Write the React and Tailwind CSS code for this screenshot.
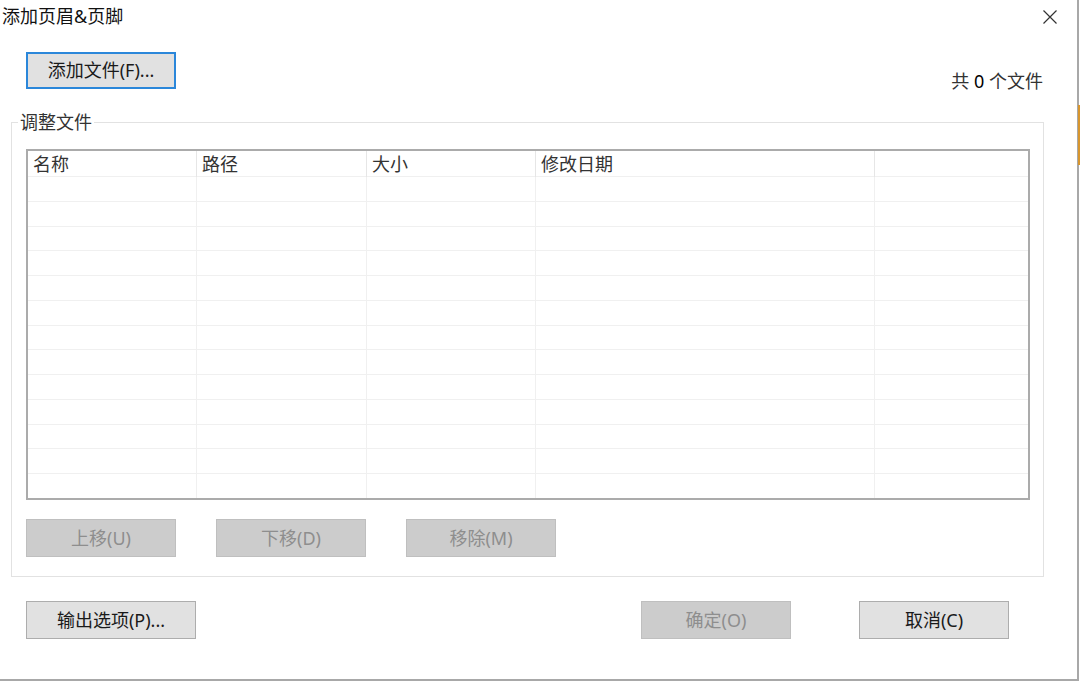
import React from "react";

const FONT = { fontFamily: '"Noto Sans", "Noto Sans CJK SC", sans-serif' };

function DisabledBtn({ children, w = "w-[150px]" }) {
  return (
    <div className={`${w} h-[38px] bg-[#cccccc] border border-[#bfbfbf] flex items-center justify-center text-[18px] text-[#8e8e8e]`}>
      {children}
    </div>
  );
}

function NormalBtn({ children, w = "w-[150px]" }) {
  return (
    <div className={`${w} h-[38px] bg-[#e1e1e1] border border-[#adadad] flex items-center justify-center text-[18px] text-[#1a1a1a]`}>
      {children}
    </div>
  );
}

const cols = ["名称", "路径", "大小", "修改日期", ""];

export default function App() {
  const rows = Array.from({ length: 13 });
  return (
    <div className="w-[1080px] h-[681px] bg-white relative overflow-hidden" style={FONT}>
      <div className="w-[1079px] h-[681px] border-r-2 border-b-2 border-[#a8a8a8] flex flex-col">
        {/* title bar */}
        <div className="h-[33px] flex items-center justify-between pl-[2px] pr-[20px]">
          <span className="text-[18px] leading-[33px] text-[#111]">添加页眉&amp;页脚</span>
          <svg width="14" height="14" viewBox="0 0 14 14" className="mt-[1px]">
            <path d="M0.5 0.5 L13.5 13.5 M13.5 0.5 L0.5 13.5" stroke="#333" strokeWidth="1.2" fill="none" />
          </svg>
        </div>

        {/* add file row */}
        <div className="mt-[19px] flex items-end justify-between pl-[26px] pr-[34px]">
          <div className="w-[150px] h-[37px] bg-[#e1e1e1] border-2 border-[#2b87da] flex items-center justify-center text-[18px] text-[#1a1a1a]">
            添加文件(F)...
          </div>
          <div className="text-[18px] leading-[18px] mb-[-1px] text-[#333]">
            共 <span className="text-black">0</span> 个文件
          </div>
        </div>

        {/* group box */}
        <div className="relative mt-[33px] ml-[11px] w-[1033px] border border-[#e2e2e2] pl-[14px] pt-[26px] pb-[19px]">
          <span className="absolute left-[6px] top-[-12px] bg-white px-[2px] text-[18px] leading-[22px] text-[#333]">
            调整文件
          </span>
          {/* table */}
          <div className="w-[1004px] h-[351px] border-2 border-[#ababab] overflow-hidden bg-white">
            <div className="grid grid-cols-[169px_170px_169px_339px_1fr] h-[26px] border-b border-[#f0f0f0]">
              {cols.map((c, i) => (
                <div
                  key={i}
                  className={`h-full pl-[5px] text-[18px] leading-[26px] text-[#333] ${i < 4 ? "border-r border-[#e6e6e6]" : ""}`}
                >
                  {c}
                </div>
              ))}
            </div>
            {rows.map((_, r) => (
              <div key={r} className="grid grid-cols-[169px_170px_169px_339px_1fr] h-[24.75px] border-b border-[#f0f0f0]">
                {cols.map((_, i) => (
                  <div key={i} className={`h-full ${i < 4 ? "border-r border-[#f0f0f0]" : ""}`} />
                ))}
              </div>
            ))}
          </div>
          {/* move buttons */}
          <div className="mt-[19px] flex gap-[40px]">
            <DisabledBtn>上移(U)</DisabledBtn>
            <DisabledBtn>下移(D)</DisabledBtn>
            <DisabledBtn>移除(M)</DisabledBtn>
          </div>
        </div>

        {/* bottom buttons */}
        <div className="mt-[24px] flex pl-[26px]">
          <NormalBtn w="w-[170px]">输出选项(P)...</NormalBtn>
          <div className="ml-[445px]">
            <DisabledBtn>确定(O)</DisabledBtn>
          </div>
          <div className="ml-[68px]">
            <NormalBtn>取消(C)</NormalBtn>
          </div>
        </div>
      </div>
      {/* orange edge of window behind */}
      <div className="absolute right-0 top-[105px] w-[2px] h-[60px] bg-[#d8962e]" />
    </div>
  );
}
